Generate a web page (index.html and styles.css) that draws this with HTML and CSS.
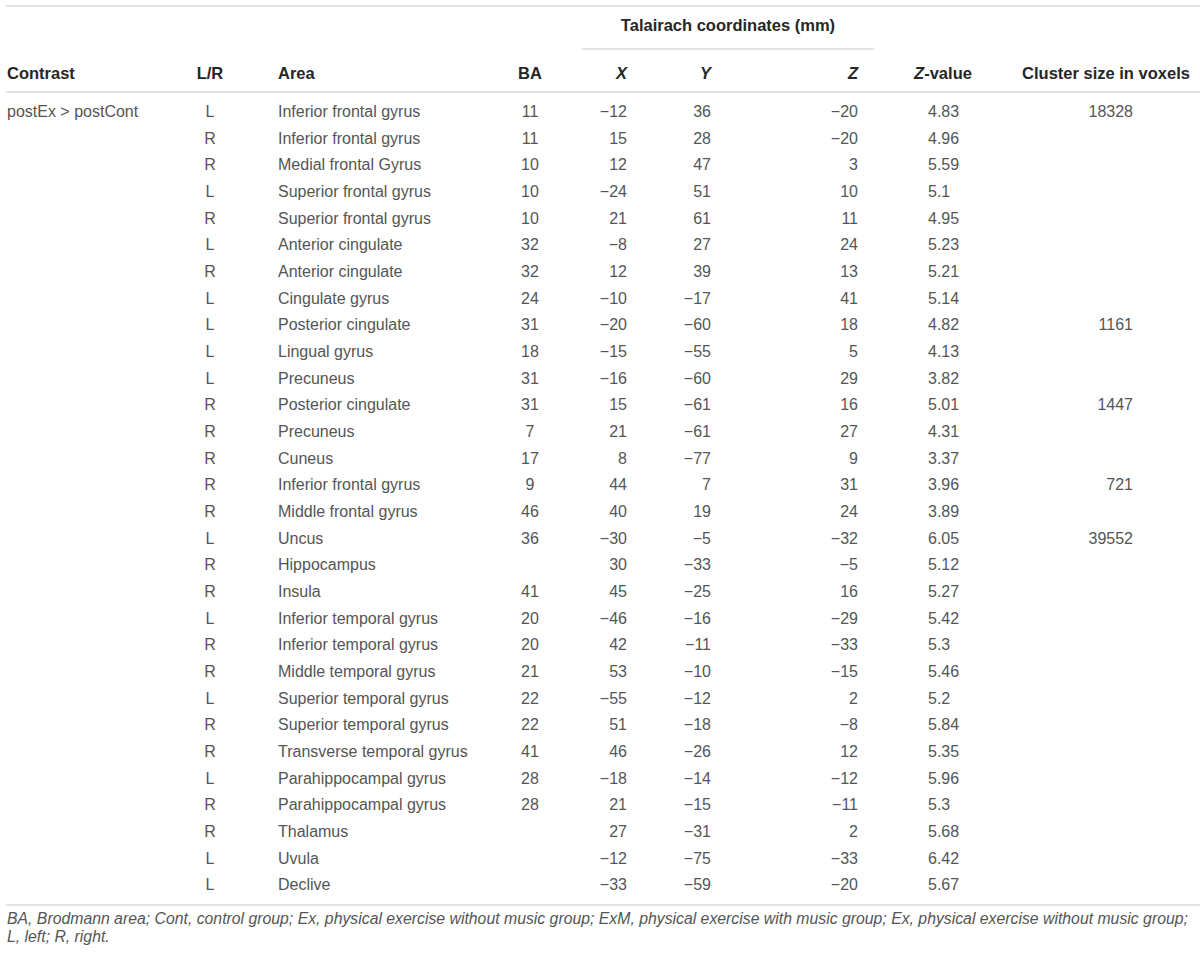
FILE: index.html
```html
<!DOCTYPE html>
<html lang="en">
<head>
<meta charset="utf-8">
<title>Talairach coordinates table</title>
<link rel="stylesheet" href="styles.css">
</head>
<body>
<div class="wrap">
<table class="data">
<colgroup>
<col class="c1"><col class="c2"><col class="c3"><col class="c4"><col class="c5"><col class="c6"><col class="c7"><col class="c8"><col class="c9">
</colgroup>
<thead>
<tr class="span-row">
<th colspan="4"></th>
<th colspan="3" class="spanner">Talairach coordinates (mm)</th>
<th colspan="2"></th>
</tr>
<tr class="head-row">
<th class="t-left">Contrast</th>
<th class="t-center">L/R</th>
<th class="t-area">Area</th>
<th class="t-center">BA</th>
<th class="t-num"><i>X</i></th>
<th class="t-num"><i>Y</i></th>
<th class="t-numz"><i>Z</i></th>
<th class="t-center"><i>Z</i>-value</th>
<th class="t-center">Cluster size in voxels</th>
</tr>
</thead>
<tbody>
<tr><td class="t-left">postEx &gt; postCont</td><td class="t-center">L</td><td class="t-area">Inferior frontal gyrus</td><td class="t-center">11</td><td class="t-num">−12</td><td class="t-num">36</td><td class="t-numz">−20</td><td class="t-zv">4.83</td><td class="t-cl">18328</td></tr>
<tr><td></td><td class="t-center">R</td><td class="t-area">Inferior frontal gyrus</td><td class="t-center">11</td><td class="t-num">15</td><td class="t-num">28</td><td class="t-numz">−20</td><td class="t-zv">4.96</td><td class="t-cl"></td></tr>
<tr><td></td><td class="t-center">R</td><td class="t-area">Medial frontal Gyrus</td><td class="t-center">10</td><td class="t-num">12</td><td class="t-num">47</td><td class="t-numz">3</td><td class="t-zv">5.59</td><td class="t-cl"></td></tr>
<tr><td></td><td class="t-center">L</td><td class="t-area">Superior frontal gyrus</td><td class="t-center">10</td><td class="t-num">−24</td><td class="t-num">51</td><td class="t-numz">10</td><td class="t-zv">5.1</td><td class="t-cl"></td></tr>
<tr><td></td><td class="t-center">R</td><td class="t-area">Superior frontal gyrus</td><td class="t-center">10</td><td class="t-num">21</td><td class="t-num">61</td><td class="t-numz">11</td><td class="t-zv">4.95</td><td class="t-cl"></td></tr>
<tr><td></td><td class="t-center">L</td><td class="t-area">Anterior cingulate</td><td class="t-center">32</td><td class="t-num">−8</td><td class="t-num">27</td><td class="t-numz">24</td><td class="t-zv">5.23</td><td class="t-cl"></td></tr>
<tr><td></td><td class="t-center">R</td><td class="t-area">Anterior cingulate</td><td class="t-center">32</td><td class="t-num">12</td><td class="t-num">39</td><td class="t-numz">13</td><td class="t-zv">5.21</td><td class="t-cl"></td></tr>
<tr><td></td><td class="t-center">L</td><td class="t-area">Cingulate gyrus</td><td class="t-center">24</td><td class="t-num">−10</td><td class="t-num">−17</td><td class="t-numz">41</td><td class="t-zv">5.14</td><td class="t-cl"></td></tr>
<tr><td></td><td class="t-center">L</td><td class="t-area">Posterior cingulate</td><td class="t-center">31</td><td class="t-num">−20</td><td class="t-num">−60</td><td class="t-numz">18</td><td class="t-zv">4.82</td><td class="t-cl">1161</td></tr>
<tr><td></td><td class="t-center">L</td><td class="t-area">Lingual gyrus</td><td class="t-center">18</td><td class="t-num">−15</td><td class="t-num">−55</td><td class="t-numz">5</td><td class="t-zv">4.13</td><td class="t-cl"></td></tr>
<tr><td></td><td class="t-center">L</td><td class="t-area">Precuneus</td><td class="t-center">31</td><td class="t-num">−16</td><td class="t-num">−60</td><td class="t-numz">29</td><td class="t-zv">3.82</td><td class="t-cl"></td></tr>
<tr><td></td><td class="t-center">R</td><td class="t-area">Posterior cingulate</td><td class="t-center">31</td><td class="t-num">15</td><td class="t-num">−61</td><td class="t-numz">16</td><td class="t-zv">5.01</td><td class="t-cl">1447</td></tr>
<tr><td></td><td class="t-center">R</td><td class="t-area">Precuneus</td><td class="t-center">7</td><td class="t-num">21</td><td class="t-num">−61</td><td class="t-numz">27</td><td class="t-zv">4.31</td><td class="t-cl"></td></tr>
<tr><td></td><td class="t-center">R</td><td class="t-area">Cuneus</td><td class="t-center">17</td><td class="t-num">8</td><td class="t-num">−77</td><td class="t-numz">9</td><td class="t-zv">3.37</td><td class="t-cl"></td></tr>
<tr><td></td><td class="t-center">R</td><td class="t-area">Inferior frontal gyrus</td><td class="t-center">9</td><td class="t-num">44</td><td class="t-num">7</td><td class="t-numz">31</td><td class="t-zv">3.96</td><td class="t-cl">721</td></tr>
<tr><td></td><td class="t-center">R</td><td class="t-area">Middle frontal gyrus</td><td class="t-center">46</td><td class="t-num">40</td><td class="t-num">19</td><td class="t-numz">24</td><td class="t-zv">3.89</td><td class="t-cl"></td></tr>
<tr><td></td><td class="t-center">L</td><td class="t-area">Uncus</td><td class="t-center">36</td><td class="t-num">−30</td><td class="t-num">−5</td><td class="t-numz">−32</td><td class="t-zv">6.05</td><td class="t-cl">39552</td></tr>
<tr><td></td><td class="t-center">R</td><td class="t-area">Hippocampus</td><td class="t-center"></td><td class="t-num">30</td><td class="t-num">−33</td><td class="t-numz">−5</td><td class="t-zv">5.12</td><td class="t-cl"></td></tr>
<tr><td></td><td class="t-center">R</td><td class="t-area">Insula</td><td class="t-center">41</td><td class="t-num">45</td><td class="t-num">−25</td><td class="t-numz">16</td><td class="t-zv">5.27</td><td class="t-cl"></td></tr>
<tr><td></td><td class="t-center">L</td><td class="t-area">Inferior temporal gyrus</td><td class="t-center">20</td><td class="t-num">−46</td><td class="t-num">−16</td><td class="t-numz">−29</td><td class="t-zv">5.42</td><td class="t-cl"></td></tr>
<tr><td></td><td class="t-center">R</td><td class="t-area">Inferior temporal gyrus</td><td class="t-center">20</td><td class="t-num">42</td><td class="t-num">−11</td><td class="t-numz">−33</td><td class="t-zv">5.3</td><td class="t-cl"></td></tr>
<tr><td></td><td class="t-center">R</td><td class="t-area">Middle temporal gyrus</td><td class="t-center">21</td><td class="t-num">53</td><td class="t-num">−10</td><td class="t-numz">−15</td><td class="t-zv">5.46</td><td class="t-cl"></td></tr>
<tr><td></td><td class="t-center">L</td><td class="t-area">Superior temporal gyrus</td><td class="t-center">22</td><td class="t-num">−55</td><td class="t-num">−12</td><td class="t-numz">2</td><td class="t-zv">5.2</td><td class="t-cl"></td></tr>
<tr><td></td><td class="t-center">R</td><td class="t-area">Superior temporal gyrus</td><td class="t-center">22</td><td class="t-num">51</td><td class="t-num">−18</td><td class="t-numz">−8</td><td class="t-zv">5.84</td><td class="t-cl"></td></tr>
<tr><td></td><td class="t-center">R</td><td class="t-area">Transverse temporal gyrus</td><td class="t-center">41</td><td class="t-num">46</td><td class="t-num">−26</td><td class="t-numz">12</td><td class="t-zv">5.35</td><td class="t-cl"></td></tr>
<tr><td></td><td class="t-center">L</td><td class="t-area">Parahippocampal gyrus</td><td class="t-center">28</td><td class="t-num">−18</td><td class="t-num">−14</td><td class="t-numz">−12</td><td class="t-zv">5.96</td><td class="t-cl"></td></tr>
<tr><td></td><td class="t-center">R</td><td class="t-area">Parahippocampal gyrus</td><td class="t-center">28</td><td class="t-num">21</td><td class="t-num">−15</td><td class="t-numz">−11</td><td class="t-zv">5.3</td><td class="t-cl"></td></tr>
<tr><td></td><td class="t-center">R</td><td class="t-area">Thalamus</td><td class="t-center"></td><td class="t-num">27</td><td class="t-num">−31</td><td class="t-numz">2</td><td class="t-zv">5.68</td><td class="t-cl"></td></tr>
<tr><td></td><td class="t-center">L</td><td class="t-area">Uvula</td><td class="t-center"></td><td class="t-num">−12</td><td class="t-num">−75</td><td class="t-numz">−33</td><td class="t-zv">6.42</td><td class="t-cl"></td></tr>
<tr><td></td><td class="t-center">L</td><td class="t-area">Declive</td><td class="t-center"></td><td class="t-num">−33</td><td class="t-num">−59</td><td class="t-numz">−20</td><td class="t-zv">5.67</td><td class="t-cl"></td></tr>
</tbody>
</table>
<p class="note"><i>BA, Brodmann area; Cont, control group; Ex, physical exercise without music group; ExM, physical exercise with music group; Ex, physical exercise without music group; L, left; R, right.</i></p>
</div>
</body>
</html>
```

FILE: styles.css
```css
html, body {
  margin: 0;
  padding: 0;
  background: #ffffff;
}

body {
  font-family: "Liberation Sans", Arial, Helvetica, sans-serif;
  color: #555555;
}

.wrap {
  padding: 5px 0 0 6px;
}

.data {
  border-collapse: collapse;
  table-layout: fixed;
  width: 1194px;
  border-top: 2px solid #e3e3e3;
  border-bottom: 2px solid #e3e3e3;
  font-size: 16px;
}

.c1 { width: 160px; }
.c2 { width: 88px; }
.c3 { width: 224px; }
.c4 { width: 104px; }
.c5 { width: 58px; }
.c6 { width: 84px; }
.c7 { width: 150px; }
.c8 { width: 138px; }
.c9 { width: 188px; }

th {
  font-weight: bold;
  font-size: 16.5px;
  color: #262626;
  line-height: 20px;
  white-space: nowrap;
}

.span-row th {
  padding: 8px 0 13px;
}

.spanner {
  text-align: center;
  border-bottom: 2px solid #e3e3e3;
}

.head-row th {
  padding: 13px 0 8px;
  border-bottom: 2px solid #e3e3e3;
}

td {
  padding: 0;
  line-height: 26.667px;
  white-space: nowrap;
}

tbody tr:first-child td {
  padding-top: 6px;
}

tbody tr:last-child td {
  padding-bottom: 5px;
}

.t-left {
  text-align: left;
  padding-left: 1px;
}

th.t-left {
  padding-left: 1px;
}

.t-center {
  text-align: center;
}

.t-area {
  text-align: left;
  padding-left: 24px;
}

th.t-area {
  padding-left: 24px;
}

.t-num {
  text-align: right;
  padding-right: 13px;
}

th.t-num {
  padding-right: 13px;
}

.t-numz {
  text-align: right;
  padding-right: 16px;
}

th.t-numz {
  padding-right: 16px;
}

.t-zv {
  text-align: left;
  padding-left: 54px;
}

.t-cl {
  text-align: right;
  padding-right: 67px;
}

.note {
  margin: 0;
  padding: 4px 12px 0 1px;
  font-size: 15.8px;
  line-height: 18px;
  color: #555555;
}
```
